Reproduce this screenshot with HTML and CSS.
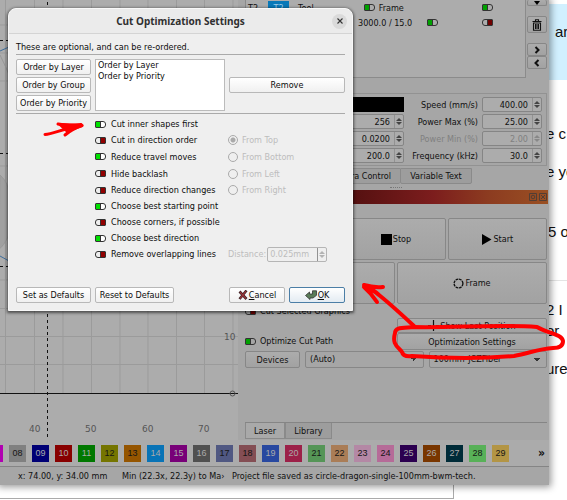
FILE: index.html
```html
<!DOCTYPE html>
<html lang="en">
<head>
<meta charset="utf-8">
<title>Cut Optimization Settings</title>
<link rel="stylesheet" href="styles.css">
</head>
<body>
<div class="page">
  <main class="app">
    <div class="workspace">
      <svg class="canvas" viewBox="0 0 238 440" preserveAspectRatio="xMinYMin slice" aria-hidden="true">
        <path class="grid" d="M5.500 0V393M34.500 0V393M63 0V393M91.500 0V393M120 0V393M148 0V393M176.500 0V393M204.500 0V393M233 0V393M0 25H238M0 53H238M0 81H238M0 280H238M0 308.500H238M0 336.500H238M0 364.500H238M0 166H238M0 223H238"/>
        <path class="smoke" d="M0 55q6 12 10 22M0 175q9 8 9 20v40q-6 12-10 14z"/>
        <path class="curve" d="M0 51l9-4M0 256l9 5"/>
        <path class="axis" d="M0 393.500H238"/>
        <path class="dash" d="M47.500 2V440M0 40.500H9M0 153.500H9M0 266.500H9"/>
        <circle class="knob" cx="232.500" cy="393.500" r="2.500"/>
        <g class="ticks">
          <text x="29" y="432">40</text><text x="85" y="432">50</text><text x="142" y="432">60</text><text x="198" y="432">70</text>
          <text x="224" y="340">10</text>
        </g>
      </svg>
      <section class="panel">
        <div class="layers">
          <div class="layer-list">
            <div class="layer-row"><span>T2</span><span class="chip">T2</span><span>Tool</span><label class="frame-opt"><input type="checkbox" class="toggle" checked>Frame</label><input type="checkbox" class="toggle last" aria-label="Show frame" checked></div>
            <div class="layer-row"><span class="speed">3000.0 / 15.0</span><input type="checkbox" class="toggle" aria-label="Output" checked><input type="checkbox" class="toggle last" aria-label="Show"></div>
          </div>
          <div class="layer-tools">
            <button class="btn t-down" aria-label="Move down"><svg viewBox="0 0 8 6"><path d="M1 1h6L4 5z"/></svg></button>
            <button class="btn t-del" aria-label="Delete"><svg viewBox="0 0 10 12"><path d="M3.500 2V.8h3V2M.5 2.500h9M1.500 4h7v7.200h-7zM3.500 5v5M5 5v5M6.500 5v5" fill="none" stroke="#111" stroke-width="1.100"/></svg></button>
            <button class="btn t-nav" aria-label="Next"><svg viewBox="0 0 8 8"><path d="M2.500 1l3 3-3 3" fill="none" stroke="#111" stroke-width="2"/></svg></button>
            <button class="btn t-nav" aria-label="Previous"><svg viewBox="0 0 8 8"><path d="M5.500 1l-3 3 3 3" fill="none" stroke="#111" stroke-width="2"/></svg></button>
          </div>
        </div>
        <div class="params">
          <span class="swatch"></span><label for="p1">Speed (mm/s)</label><span class="spin"><input id="p1" value="400.00"><i class="steps"></i></span>
          <span class="spin"><input aria-label="Passes" value="256"><i class="steps"></i></span><label for="p2">Power Max (%)</label><span class="spin"><input id="p2" value="25.00"><i class="steps"></i></span>
          <span class="spin"><input aria-label="Interval" value="0.0200"><i class="steps"></i></span><label for="p3" class="off">Power Min (%)</label><span class="spin off"><input id="p3" value="2.00" disabled><i class="steps"></i></span>
          <span class="spin"><input aria-label="Pulse" value="200.0"><i class="steps"></i></span><label for="p4">Frequency (kHz)</label><span class="spin"><input id="p4" value="30.0"><i class="steps"></i></span>
        </div>
        <div class="tabs top-tabs"><button class="tab camera">Camera Control</button><button class="tab">Variable Text</button></div>
        <div class="grip"></div>
        <div class="dock-title"><svg viewBox="0 0 18 8"><path d="M.5.5h7v7h-7zM10.500.5h7v7h-7zM12 2l4 4M16 2l-4 4" /><circle cx="4" cy="4" r="1.800"/></svg></div>
        <div class="jobs">
          <button class="btn">Pause</button>
          <button class="btn"><svg viewBox="0 0 11 11"><path d="M0 0h11v11H0z"/></svg>Stop</button>
          <button class="btn"><svg viewBox="0 0 11 11"><path d="M1 0l9.500 5.500L1 11z"/></svg>Start</button>
        </div>
        <div class="frames">
          <button class="btn">Frame</button>
          <button class="btn"><svg viewBox="0 0 12 12"><circle cx="6" cy="6" r="4.800" fill="none" stroke="#111" stroke-width="1.500" stroke-dasharray="3 .77"/></svg>Frame</button>
        </div>
        <div class="options">
          <div class="checks">
            <label><input type="checkbox" class="toggle">Cut Selected Graphics</label>
            <label><input type="checkbox" class="toggle" checked>Optimize Cut Path</label>
          </div>
          <div class="actions">
            <button class="btn"><svg viewBox="0 0 11 11"><path d="M5.500 0v11M0 5.500h3M8 5.500h3" stroke="#111" stroke-width="1.200"/></svg>Show Last Position</button>
            <button class="btn">Optimization Settings</button>
          </div>
        </div>
        <div class="devices">
          <button class="btn">Devices</button>
          <select aria-label="Device port"><option>(Auto)</option></select>
          <select aria-label="Device profile"><option>100mm-JCZFiber</option></select>
        </div>
        <div class="tabs bottom-tabs"><button class="tab current">Laser</button><button class="tab">Library</button></div>
      </section>
    </div>
    <div class="palette">
      <button class="c07" aria-label="07"></button><button class="c08">08</button><button class="c09">09</button><button class="c10">10</button><button class="c11">11</button><button class="c12">12</button><button class="c13">13</button><button class="c14">14</button><button class="c15">15</button><button class="c16">16</button><button class="c17">17</button><button class="c18">18</button><button class="c19">19</button><button class="c20">20</button><button class="c21">21</button><button class="c22">22</button><button class="c23">23</button><button class="c24">24</button><button class="c25">25</button><button class="c26">26</button><button class="c27">27</button><button class="c28">28</button><button class="c29">29</button>
      <span class="more">»</span>
    </div>
    <footer class="status"><span>x: 74.00, y: 34.00 mm</span><span>Min (22.3x, 22.3y) to Ma›</span><span>Project file saved as circle-dragon-single-100mm-bwm-tech.</span></footer>
  </main>
  <aside class="post">
    <p class="quote">ar</p>
    <p class="l1">e c</p><p class="l2">e yo</p><p class="l3">5 o</p>
    <p class="l4">2 I</p><p class="l5">or</p><p class="l6">ure</p>
  </aside>
  <div class="reply"></div>
</div>

<section class="dialog" role="dialog" aria-labelledby="dt">
  <header><h1 id="dt">Cut Optimization Settings</h1><button class="close" aria-label="Close"><svg viewBox="0 0 6 6"><path d="M.5.5l5 5M5.500.5l-5 5" stroke="#333" stroke-width="1.100"/></svg></button></header>
  <p class="intro">These are optional, and can be re-ordered.</p>
  <div class="ordering">
    <div class="order-buttons"><button class="dbtn">Order by Layer</button><button class="dbtn">Order by Group</button><button class="dbtn">Order by Priority</button></div>
    <ul><li>Order by Layer</li><li>Order by Priority</li></ul>
    <button class="dbtn">Remove</button>
  </div>
  <div class="choices">
    <label><input type="checkbox" class="toggle" checked>Cut inner shapes first</label><span></span>
    <label><input type="checkbox" class="toggle">Cut in direction order</label><label class="off"><input type="radio" name="dir" checked disabled>From Top</label>
    <label><input type="checkbox" class="toggle" checked>Reduce travel moves</label><label class="off"><input type="radio" name="dir" disabled>From Bottom</label>
    <label><input type="checkbox" class="toggle">Hide backlash</label><label class="off"><input type="radio" name="dir" disabled>From Left</label>
    <label><input type="checkbox" class="toggle">Reduce direction changes</label><label class="off"><input type="radio" name="dir" disabled>From Right</label>
    <label><input type="checkbox" class="toggle" checked>Choose best starting point</label><span></span>
    <label><input type="checkbox" class="toggle">Choose corners, if possible</label><span></span>
    <label><input type="checkbox" class="toggle" checked>Choose best direction</label><span></span>
    <label><input type="checkbox" class="toggle">Remove overlapping lines</label><label class="off distance">Distance:<span class="spin light"><input value="0.025mm" disabled><i class="steps"></i></span></label>
  </div>
  <div class="dialog-actions">
    <button class="dbtn">Set as Defaults</button><button class="dbtn">Reset to Defaults</button>
    <button class="dbtn"><svg viewBox="0 0 10 10"><path d="M1.500 1.500l7 7.500M8.500.5L1.500 9" fill="none" stroke="#3a2224" stroke-width="2.600"/><path d="M2 2l6 6.500M8 1.200L2 8.500" fill="none" stroke="#9a3338" stroke-width="1.200"/></svg><span><u>C</u>ancel</span></button>
    <button class="dbtn default"><svg viewBox="0 0 12 10"><path d="M.5 5.500L4.500 2v2h3V.8h4v4.500L8 8H5v1.500z" fill="#5a7d5a" stroke="#333" stroke-width=".8"/></svg><span><u>O</u>K</span></button>
  </div>
</section>

<svg class="marks" viewBox="0 0 567 500" aria-hidden="true">
  <path d="M45 134.500C53 134 62 129 81 125.500M58 124q9 2 23 0.500M82 125.500Q72 129 65 135"/>
  <path d="M60 124.500L82 125.500L67 131z" class="fill"/>
  <path d="M414 326C400 313 389 303 379 295Q374 290 364 286.500M383 287Q374 288 364 285M364 287Q371 293 377 302" class="thick"/>
  <path d="M414 327C402 328 395 327 395 333C392 344 397 346 402 352Q403 357 412 356C440 358 480 359 514 356C530 353 538 349 553 348Q563 348 563 341C562 334 549 334 537 327C500 324 450 328 414 327Z" class="thick"/>
</svg>
</body>
</html>
```
FILE: styles.css
```css
* { box-sizing: border-box; }
body { margin: 0; background: #fff; overflow: hidden; font: 9px/12px "DejaVu Sans Condensed", "DejaVu Sans", sans-serif; color: #101010; }
button, input, select { font: inherit; color: inherit; margin: 0; padding: 0; border: 0; background: none; }
svg { display: block; }
p, h1, ul { margin: 0; padding: 0; }
label { display: flex; align-items: center; white-space: nowrap; }

.page { display: grid; grid-template-columns: minmax(0, 1fr) 18px; grid-template-rows: auto 14px; }
.app { background: #a6a6a6; box-shadow: 0 0 7px 2px rgba(0,0,0,.4); z-index: 1; min-width: 0; }
.workspace { display: grid; grid-template-columns: minmax(0, 1fr) 311px; }

.canvas { width: 100%; height: 440px; background: #acacac; }
.grid { stroke: #9b9b9b; fill: none; }
.smoke { fill: #a0a0a0; stroke: #989898; }
.curve { stroke: #3d6d9c; fill: none; }
.axis { stroke: #111; }
.dash { stroke: #111; stroke-dasharray: 3 3; fill: none; }
.knob { fill: none; stroke: #555; }
.ticks { font-family: "DejaVu Sans", sans-serif; font-size: 9px; fill: #555; }

.panel { min-width: 0; display: flex; flex-direction: column; padding: 0 2px 0 7px; }

/* Two-part switch: a square coloured half beside a round empty half. */
.toggle { appearance: none; flex: none; width: 11px; height: 7px; border: 1px solid #333; border-radius: 3px 1px 1px 3px; background: linear-gradient(90deg, transparent 4px, #333 4px, #333 5px, #700000 5px); }
.toggle:checked { border-radius: 1px 3px 3px 1px; background: linear-gradient(90deg, #00a000 4px, #333 4px, #333 5px, transparent 5px); }

.layers { display: grid; grid-template-columns: minmax(0, 1fr) 20px; gap: 1px; height: 78px; }
.layer-list { background: #acacac; border: solid #8b8b8b; border-width: 0 1px 1px; }
.layer-row { display: flex; align-items: center; height: 15px; padding: 0 32px 0 2px; }
.layer-row .chip { width: 21px; height: 14px; margin: 0 9px 0 10px; background: #0878b8; color: #9ccbe8; text-align: center; line-height: 14px; }
.frame-opt { margin-left: 50px; gap: 4px; }
.layer-row .last { margin-left: auto; }
.speed { width: 69px; margin-left: 110px; white-space: nowrap; }

.btn { display: flex; align-items: center; justify-content: center; white-space: nowrap; border: 1px solid #878787; border-radius: 2px; background: linear-gradient(#acacac, #a2a2a2); min-width: 0; }
.btn svg { width: 11px; height: 11px; margin-right: 1px; }
.layer-tools svg { margin: 0; width: 8px; height: 8px; }
.t-down { width: 100%; height: 6px; margin-bottom: 10px; border-top: 0; }
.t-down svg { height: 6px; }
.t-del { width: 100%; height: 17px; margin-bottom: 10px; }
.t-del svg { width: 10px; height: 12px; }
.t-nav { width: 100%; height: 13px; }

.params { display: grid; grid-template-columns: minmax(0, 1fr) 78px 60px; grid-auto-rows: 15px; row-gap: 2px; margin-top: 15px; padding: 3px 4px 3px 92px; border: 1px solid #929292; height: 73px; }
.params label { justify-content: flex-end; padding-right: 4px; }
.swatch { background: #000; }
.spin { display: flex; border: 1px solid #858585; border-radius: 2px; background: #acacac; min-width: 0; }
.spin input { flex: 1; width: 0; min-width: 0; text-align: right; padding-right: 4px; }
.steps { flex: none; width: 9px; border-left: 1px solid #929292; position: relative; }
.steps::before, .steps::after { content: ""; position: absolute; left: 1px; border: solid transparent; border-width: 0 3px; }
.steps::before { top: 3px; border-bottom: 3px solid #444; }
.steps::after { bottom: 3px; border-top: 3px solid #444; }
.params .off { color: #808080; }
.off .steps::before, .off .steps::after { opacity: .35; }

.tabs { display: flex; align-items: stretch; }
.tab { border: 1px solid #8a8a8a; background: #9d9d9d; text-align: center; }
.top-tabs { height: 16px; margin-top: 2px; padding-left: 71px; }
.top-tabs .tab { width: 72px; border-radius: 0 0 2px 2px; }
.top-tabs .camera { width: 84px; text-align: right; padding-right: 9px; border-right: 0; }
.grip { width: 12px; height: 2px; margin: 3px auto 1px; border-top: 1px dotted #777; }
.dock-title { height: 14px; display: flex; align-items: center; justify-content: flex-end; background: linear-gradient(90deg, #541010 35%, #7c1d1d 62%, #8c3b20 80%, #9a5023); margin-right: -1px; }
.dock-title svg { width: 18px; height: 8px; margin-right: 1px; fill: none; stroke: #523e34; }
.jobs { display: grid; grid-template-columns: repeat(3, minmax(0, 1fr)); gap: 2px; height: 42px; margin-top: 14px; }
.frames { display: grid; grid-template-columns: repeat(2, minmax(0, 1fr)); gap: 2px; height: 42px; margin-top: 2px; }
.options { display: grid; grid-template-columns: minmax(0, 1fr) 150px; height: 46px; }
.checks { display: flex; flex-direction: column; justify-content: flex-end; gap: 18px; padding-bottom: 3px; }
.checks label { gap: 4px; height: 12px; }
.actions { padding-top: 14px; display: grid; grid-template-rows: 15px 17px; }
.devices { display: grid; grid-template-columns: 55px minmax(0, 1fr) minmax(0, 1fr); gap: 5px; height: 17px; margin-top: 1px; }
select { appearance: none; min-width: 0; padding: 0 4px 2px; border: 1px solid #878787; border-radius: 2px; background: linear-gradient(45deg, transparent 50%, #333 50%) right 9px center / 3px 3px no-repeat, linear-gradient(-45deg, transparent 50%, #333 50%) right 6px center / 3px 3px no-repeat, #a6a6a6; }
.bottom-tabs { margin-top: 54px; height: 17px; border-top: 1px solid #858585; }
.bottom-tabs .tab { width: 47px; border-top: 0; }
.bottom-tabs .current { width: 40px; background: #a9a9a9; }

.palette { display: flex; align-items: center; gap: 6px; height: 27px; overflow: hidden; background: #ababab; border-bottom: 1px solid #858585; }
.palette button { flex: none; width: 17px; height: 17px; color: #aaa; font-family: "Liberation Sans", sans-serif; }
.palette .c07 { width: 3px; }
.more { margin-left: auto; padding-right: 4px; font-size: 12px; font-weight: bold; }
.c07 { background: #b100b1; }
.c08 { background: #808080; }
.c09 { background: #000075; }
.c10 { background: #880000; }
.c11 { background: #007800; }
.c12 { background: #757500; }
.c13 { background: #955500; }
.c14 { background: #0873b6; }
.c15 { background: #780078; }
.c16 { background: #505050; }
.c17 { background: #505882; }
.c18 { background: #844e54; }
.c19 { background: #2848a0; }
.c20 { background: #9c2048; }
.c21 { background: #559557; }
.c22 { background: #aa7d57; }
.c23 { background: #b488a5; }
.c24 { background: #b66b98; }
.c25 { background: #2c0050; }
.c26 { background: #793600; }
.c27 { background: #002b38; }
.c28 { background: #58b158; }
.c29 { background: #b39545; }
.palette .c08, .palette .c12, .palette .c13, .palette .c17, .palette .c18, .palette .c21, .palette .c22, .palette .c23, .palette .c24, .palette .c28, .palette .c29 { color: #151515; }

.status { display: flex; align-items: center; height: 18px; padding-left: 18px; white-space: nowrap; overflow: hidden; }
.status span:nth-child(1) { width: 104px; }
.status span:nth-child(2) { width: 110px; }

.post { font: 15px/19px "Liberation Sans", sans-serif; color: #111; white-space: nowrap; display: flow-root; }
.post p { margin-left: -3px; }
.post .quote { margin: 4px 0 0 -4px; padding: 18px 0 38px 10px; height: 76px; background: #d1f0ff; }
.post .l1 { margin-top: 44px; }
.post .l2 { margin-top: 19px; }
.post .l3 { margin-top: 41px; margin-left: -1px; }
.post .l4 { margin-top: 39px; padding-top: 19px; border-top: 1px solid #e4e4e4; }
.post .l5 { margin-top: 2px; }
.post .l6 { margin-top: 19px; }
.reply { width: 454px; border: solid #aaa; border-width: 0 1px 1px 0; }

.dialog { position: absolute; left: 8px; top: 8px; width: 345px; color: #0c0c0c; background: #efefef; border: 1px solid #f8f8f8; border-radius: 8px 8px 0 0; box-shadow: 0 1px 3px 1px rgba(0,0,0,.55); z-index: 2; padding-bottom: 7px; }
.dialog header { display: grid; grid-template-columns: 15px 1fr 15px; align-items: center; height: 25px; padding: 0 5px; border-bottom: 1px solid #d4d4d4; background: #ebebeb; border-radius: 8px 8px 0 0; }
h1 { grid-column: 2; text-align: center; font: bold 10px/14px "Noto Sans", sans-serif; color: #303030; }
.close { width: 15px; height: 15px; border-radius: 50%; background: #dadada; display: grid; place-items: center; }
.close svg { width: 6px; height: 6px; }
.intro { margin: 0 7px; padding: 7px 0 1px; height: 21px; border-bottom: 1px solid #aaa; }
.ordering { display: grid; grid-template-columns: 75px 130px 1fr; gap: 4px; align-items: center; margin: 0 7px; padding: 4px 0 2px; border-bottom: 1px solid #aaa; }
.order-buttons { display: grid; gap: 2px; }
.dbtn { display: flex; align-items: center; justify-content: center; height: 16px; min-width: 0; white-space: nowrap; border: 1px solid #b8b8b8; border-radius: 2px; background: linear-gradient(#fff, #f0f0f0); }
.dbtn svg { width: 10px; height: 10px; margin-right: 1px; }
.ordering ul { list-style: none; height: 52px; border: 1px solid #bbb; background: #fff; padding: 0 2px; line-height: 11px; }
.choices { display: grid; grid-template-columns: 133px 1fr; grid-template-rows: repeat(2, 16px) repeat(2, 17px) repeat(5, 16px); padding: 2px 8px 0 86px; }
.choices label { gap: 5px; }
.choices .toggle { background: linear-gradient(90deg, #eee 4px, #333 4px, #333 5px, #900000 5px); }
.choices .toggle:checked { background: linear-gradient(90deg, #00e000 4px, #333 4px, #333 5px, #fff 5px); }
.choices .off { color: #bdbdbd; gap: 4px; }
.choices input[type=radio] { appearance: none; width: 10px; height: 10px; border: 1px solid #aaa; border-radius: 50%; }
.choices input[type=radio]:checked { background: radial-gradient(circle, #aaa 2px, transparent 3px); }
.choices .distance { gap: 1px; }
.light { width: 60px; height: 15px; border-color: #b5b5b5; background: #efefef; }
.light input { text-align: left; padding-left: 2px; }
.dialog-actions { display: grid; grid-template-columns: 75px 79px 1fr 56px 56px; column-gap: 4px; padding: 25px 7px 0; }
.dialog-actions .dbtn:nth-child(3) { grid-column: 4; }
.dialog-actions .default { border-color: #4b7ea6; background: linear-gradient(#fff, #e3ebf2); }
.default svg { width: 12px; }

.marks { position: absolute; left: 0; top: 0; width: 567px; height: 500px; z-index: 3; pointer-events: none; fill: none; stroke: #f00; stroke-width: 3; stroke-linecap: round; stroke-linejoin: round; }
.marks .thick { stroke-width: 4; }
.marks .fill { fill: #f00; }
```
